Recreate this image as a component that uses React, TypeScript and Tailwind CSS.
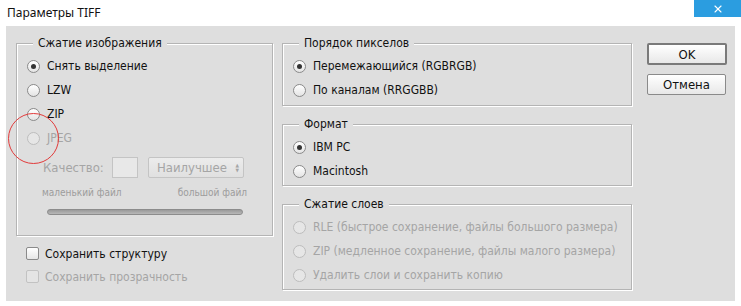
import { X } from "lucide-react";

const FONT = "font-['DejaVu_Sans_Condensed','Liberation_Sans',sans-serif]";

function Radio({ label, checked = false, disabled = false }: { label: string; checked?: boolean; disabled?: boolean }) {
    return (
        <div className="flex items-center h-[24px] gap-[7px] whitespace-nowrap">
            <span
                className={`w-[13px] h-[13px] shrink-0 rounded-full border flex items-center justify-center ${
                    disabled ? "border-[#bdbdbd] bg-[#e6e6e6]" : "border-[#8a8a8a] bg-gradient-to-b from-white to-[#e4e4e4]"
                }`}
            >
                {checked && <span className="w-[5px] h-[5px] rounded-full bg-[#333]" />}
            </span>
            <span className={disabled ? "text-[#a5a5a5]" : "text-[#111]"}>{label}</span>
        </div>
    );
}

function Check({ label, disabled = false }: { label: string; disabled?: boolean }) {
    return (
        <div className="flex items-center h-[23px] gap-[6px]">
            <span
                className={`w-[13px] h-[13px] rounded-[2px] border ${
                    disabled ? "border-[#c2c2c2] bg-[#e4e4e4]" : "border-[#8a8a8a] bg-gradient-to-b from-white to-[#e6e6e6]"
                }`}
            />
            <span className={disabled ? "text-[#a5a5a5]" : "text-[#111]"}>{label}</span>
        </div>
    );
}

function Group({ title, className, children }: { title: string; className: string; children: React.ReactNode }) {
    return (
        <div className={`relative border border-[#b4b4b4] shadow-[1px_1px_0_#fff,inset_1px_1px_0_#fff] ${className}`}>
            {/* legend */}
            <span className="absolute -top-[9px] left-[16px] px-[5px] bg-[#dedede] text-[#111] leading-[16px]">{title}</span>
            {children}
        </div>
    );
}

export default function App() {
    return (
        <div className={`w-[741px] h-[306px] bg-white text-[12px] ${FONT} relative overflow-hidden`}>
            {/* Title bar */}
            <div className="flex items-center justify-between h-[26px]">
                <span className="pl-[7px] text-[12px] text-[#111] font-['Noto_Sans',sans-serif]">Параметры TIFF</span>
                <div className="self-start w-[47px] h-[17px] bg-[#2b9de0] flex items-center justify-center">
                    <X className="w-[12px] h-[12px] text-white" strokeWidth={2.2} />
                </div>
            </div>

            {/* Body */}
            <div className="mx-[6px] h-[275px] bg-[#dedede] flex pl-[10px] pt-[17px]">
                {/* Left column */}
                <div className="w-[257px] flex flex-col">
                    <Group title="Сжатие изображения" className="h-[193px] pl-[10px] pt-[10px]">
                        <Radio label="Снять выделение" checked />
                        <Radio label="LZW" />
                        <Radio label="ZIP" />
                        <Radio label="JPEG" disabled />

                        <div className="flex items-center mt-[7px] pl-[16px] text-[13px] text-[#a5a5a5]">
                            <span className="w-[69px]">Качество:</span>
                            <span className="w-[26px] h-[21px] border border-[#c4c4c4] bg-[#e8e8e8]" />
                            <span className="ml-[10px] w-[96px] h-[21px] border border-[#c4c4c4] rounded-[2px] bg-gradient-to-b from-[#ececec] to-[#e0e0e0] flex items-center justify-between pl-[8px] pr-[4px]">
                                <span>Наилучшее</span>
                                <span className="flex flex-col items-center text-[5px] leading-[5px]">
                                    <span>▲</span>
                                    <span>▼</span>
                                </span>
                            </span>
                        </div>

                        <div className="flex justify-between w-[220px] mt-[7px] pl-[15px] text-[10px] text-[#9c9c9c]">
                            <span>маленький файл</span>
                            <span>большой файл</span>
                        </div>

                        <div className="ml-[20px] mt-[9px] w-[196px] h-[6px] rounded-full border border-[#8c8c8c] bg-gradient-to-b from-[#9a9a9a] to-[#b8b8b8]" />
                    </Group>

                    <div className="mt-[6px] pl-[10px]">
                        <Check label="Сохранить структуру" />
                        <Check label="Сохранить прозрачность" disabled />
                    </div>
                </div>

                {/* Right column */}
                <div className="ml-[9px] w-[350px] flex flex-col gap-[18px]">
                    <Group title="Порядок пикселов" className="h-[63px] pl-[10px] pt-[10px]">
                        <Radio label="Перемежающийся (RGBRGB)" checked />
                        <Radio label="По каналам (RRGGBB)" />
                    </Group>
                    <Group title="Формат" className="h-[62px] pl-[10px] pt-[10px]">
                        <Radio label="IBM PC" checked />
                        <Radio label="Macintosh" />
                    </Group>
                    <Group title="Сжатие слоев" className="h-[86px] pl-[10px] pt-[10px]">
                        <Radio label="RLE (быстрое сохранение, файлы большого размера)" disabled />
                        <Radio label="ZIP (медленное сохранение, файлы малого размера)" disabled />
                        <Radio label="Удалить слои и сохранить копию" disabled />
                    </Group>
                </div>

                {/* Buttons */}
                <div className="ml-[15px] flex flex-col gap-[9px]">
                    <button className="w-[80px] h-[22px] border-2 border-[#7a7a7a] rounded-[2px] bg-gradient-to-b from-white to-[#e8e8e8] text-[13px] text-[#111]">OK</button>
                    <button className="w-[79px] h-[21px] border border-[#8a8a8a] rounded-[2px] bg-gradient-to-b from-white to-[#e8e8e8] text-[13px] text-[#111]">Отмена</button>
                </div>
            </div>

            {/* Red annotation circle */}
            <div className="absolute left-[8px] top-[113px] w-[51px] h-[51px] rounded-full border border-[#e23a3a]" />
        </div>
    );
}
